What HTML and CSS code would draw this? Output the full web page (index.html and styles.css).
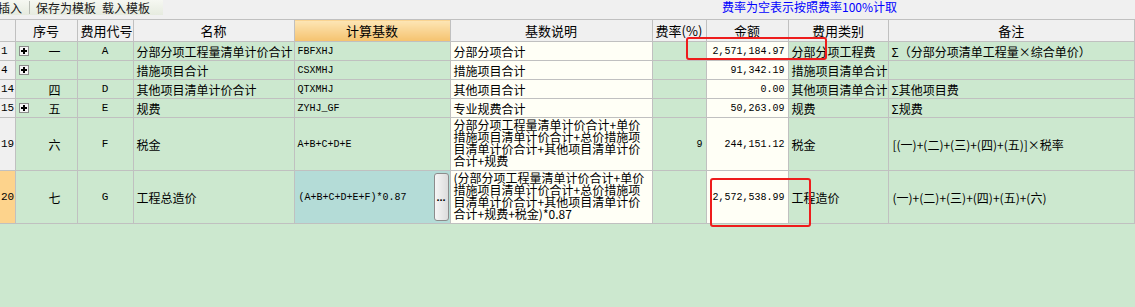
FILE: index.html
```html
<!DOCTYPE html>
<html lang="zh-CN">
<head>
    <meta charset="UTF-8">
    <title>费用汇总</title>
    <link rel="stylesheet" href="styles.css">
</head>
<body>
<div class="toolbar">
    <div class="tools">
        <span class="tool cut">插入</span>
        <span class="sep"></span>
        <span class="tool">保存为模板</span>
        <span class="tool">载入模板</span>
    </div>
    <span class="hint">费率为空表示按照费率100%计取</span>
</div>
<div class="sheet">
    <table class="grid">
        <colgroup>
            <col style="width:15px">
            <col style="width:62px">
            <col style="width:56px">
            <col style="width:161px">
            <col style="width:156px">
            <col style="width:202px">
            <col style="width:54px">
            <col style="width:82px">
            <col style="width:100px">
            <col>
        </colgroup>
        <thead>
        <tr>
            <th class="rn"></th>
            <th>序号</th>
            <th>费用代号</th>
            <th>名称</th>
            <th class="active">计算基数</th>
            <th>基数说明</th>
            <th>费率(%)</th>
            <th>金额</th>
            <th>费用类别</th>
            <th>备注</th>
        </tr>
        </thead>
        <tbody>
        <tr>
            <td class="rn">1</td>
            <td class="seq"><span class="expand"></span>一</td>
            <td class="code">A</td>
            <td>分部分项工程量清单计价合计</td>
            <td class="mono">FBFXHJ</td>
            <td class="paper">分部分项合计</td>
            <td></td>
            <td class="paper money">2,571,184.97</td>
            <td>分部分项工程费</td>
            <td>Σ（分部分项清单工程量×综合单价）</td>
        </tr>
        <tr>
            <td class="rn">4</td>
            <td class="seq"><span class="expand"></span></td>
            <td class="code"></td>
            <td>措施项目合计</td>
            <td class="mono">CSXMHJ</td>
            <td class="paper">措施项目合计</td>
            <td></td>
            <td class="paper money">91,342.19</td>
            <td>措施项目清单合计</td>
            <td></td>
        </tr>
        <tr>
            <td class="rn">14</td>
            <td class="seq">四</td>
            <td class="code">D</td>
            <td>其他项目清单计价合计</td>
            <td class="mono">QTXMHJ</td>
            <td class="paper">其他项目合计</td>
            <td></td>
            <td class="paper money">0.00</td>
            <td>其他项目清单合计</td>
            <td>Σ其他项目费</td>
        </tr>
        <tr>
            <td class="rn">15</td>
            <td class="seq"><span class="expand"></span>五</td>
            <td class="code">E</td>
            <td>规费</td>
            <td class="mono">ZYHJ_GF</td>
            <td class="paper">专业规费合计</td>
            <td></td>
            <td class="paper money">50,263.09</td>
            <td>规费</td>
            <td>Σ规费</td>
        </tr>
        <tr class="tall">
            <td class="rn">19</td>
            <td class="seq">六</td>
            <td class="code">F</td>
            <td>税金</td>
            <td class="mono">A+B+C+D+E</td>
            <td class="paper wrap">分部分项工程量清单计价合计+单价<br>措施项目清单计价合计+总价措施项<br>目清单计价合计+其他项目清单计价<br>合计+规费</td>
            <td class="money">9</td>
            <td class="paper money">244,151.12</td>
            <td>税金</td>
            <td class="note">[(一)+(二)+(三)+(四)+(五)]×税率</td>
        </tr>
        <tr class="tall current">
            <td class="rn">20</td>
            <td class="seq">七</td>
            <td class="code">G</td>
            <td>工程总造价</td>
            <td class="mono editing">
                <div class="edit-box">
                    <span>(A+B+C+D+E+F)*0.87</span>
                    <button class="more" type="button">...</button>
                </div>
            </td>
            <td class="paper wrap">(分部分项工程量清单计价合计+单价<br>措施项目清单计价合计+总价措施项<br>目清单计价合计+其他项目清单计价<br>合计+规费+税金)*0.87</td>
            <td></td>
            <td class="paper money">2,572,538.99</td>
            <td>工程造价</td>
            <td class="note">(一)+(二)+(三)+(四)+(五)+(六)</td>
        </tr>
        </tbody>
    </table>
    <div class="mark mark-top"></div>
    <div class="mark mark-bottom"></div>
</div>
</body>
</html>
```

FILE: styles.css
```css
* {
    box-sizing: border-box;
}

body {
    margin: 0;
    width: 1135px;
    height: 307px;
    overflow: hidden;
    background-color: #cce8cf;
    font-family: "Noto Sans CJK SC", "DejaVu Sans", sans-serif;
    font-size: 12px;
    color: #000000;
}

.toolbar {
    height: 19px;
    background-color: #f0f0f0;
    display: flex;
    align-items: flex-start;
}

.tools {
    height: 15px;
    width: 163px;
    display: flex;
    align-items: center;
    background: linear-gradient(#f6f8f2, #e6ebdf);
    font-size: 12px;
    line-height: 15px;
}

.tool {
    margin-right: 6px;
    color: #1a1a1a;
}

.tool.cut {
    margin-left: -2px;
    margin-right: 7px;
}

.sep {
    width: 1px;
    height: 13px;
    background-color: #b8bcb4;
    margin-right: 6px;
}

.hint {
    margin-left: 559px;
    line-height: 13px;
    color: #0000ff;
    font-size: 12px;
}

.sheet {
    position: relative;
}

.grid {
    width: 1135px;
    table-layout: fixed;
    border-collapse: collapse;
}

.grid th,
.grid td {
    border: 1px solid #c0c0c0;
    padding: 0 3px;
    white-space: nowrap;
    overflow: hidden;
    text-align: left;
    font-weight: normal;
}

.grid th {
    height: 22px;
    background-color: #f0f0f0;
    text-align: center;
    font-size: 13px;
    line-height: 20px;
}

.grid th.active {
    background: linear-gradient(#fde6b6, #f5c26e);
}

.grid tbody tr {
    height: 19px;
}

.grid tbody tr.tall {
    height: 53px;
}

.grid td {
    line-height: 17px;
}

.grid .rn {
    border-left: none;
    padding: 0 1px;
    background-color: #f0f0f0;
    font-family: "Liberation Mono", monospace;
    font-size: 11px;
    text-align: left;
}

.grid tr.current .rn {
    background-color: #fdd38c;
}

.grid .seq {
    position: relative;
    padding-left: 20px;
    text-align: center;
}

.expand {
    position: absolute;
    left: 3px;
    top: 50%;
    width: 10px;
    height: 10px;
    margin-top: -5px;
    border: 1px solid #8a8a8a;
    background-color: #f4f4f4;
}

.expand::before,
.expand::after {
    content: "";
    position: absolute;
    background-color: #000000;
}

.expand::before {
    left: 1px;
    right: 1px;
    top: 3px;
    height: 2px;
}

.expand::after {
    top: 1px;
    bottom: 1px;
    left: 3px;
    width: 2px;
}

.grid .code {
    text-align: center;
    font-family: "Liberation Mono", monospace;
    font-size: 11px;
}

.grid .mono {
    font-family: "Liberation Mono", monospace;
    font-size: 10px;
}

.grid .paper {
    background-color: #fffff6;
}

.grid .money {
    text-align: right;
    font-family: "Liberation Mono", monospace;
    font-size: 10px;
}

.grid .wrap {
    vertical-align: top;
    padding-top: 1px;
    line-height: 12px;
    font-size: 12px;
}

.grid .note {
    padding-left: 4px;
}

.grid .editing {
    padding: 0;
    background-color: #b4dcd7;
}

.edit-box {
    display: flex;
    align-items: center;
    height: 51px;
    padding: 2px 1px 2px 4px;
}

.edit-box span {
    flex: 1;
}

.more {
    width: 15px;
    height: 48px;
    padding: 0;
    border: 1px solid #8c8c8c;
    border-radius: 3px;
    background: linear-gradient(90deg, #f6f6f6, #dcdcdc);
    font-family: "Liberation Sans", sans-serif;
    font-size: 11px;
    font-weight: bold;
    line-height: 10px;
    color: #000000;
}

.mark {
    position: absolute;
    border: 2px solid #ee1c1c;
    border-radius: 3px;
}

.mark-top {
    left: 686px;
    top: 18px;
    width: 141px;
    height: 23px;
}

.mark-bottom {
    left: 710px;
    top: 159px;
    width: 101px;
    height: 49px;
}
```
